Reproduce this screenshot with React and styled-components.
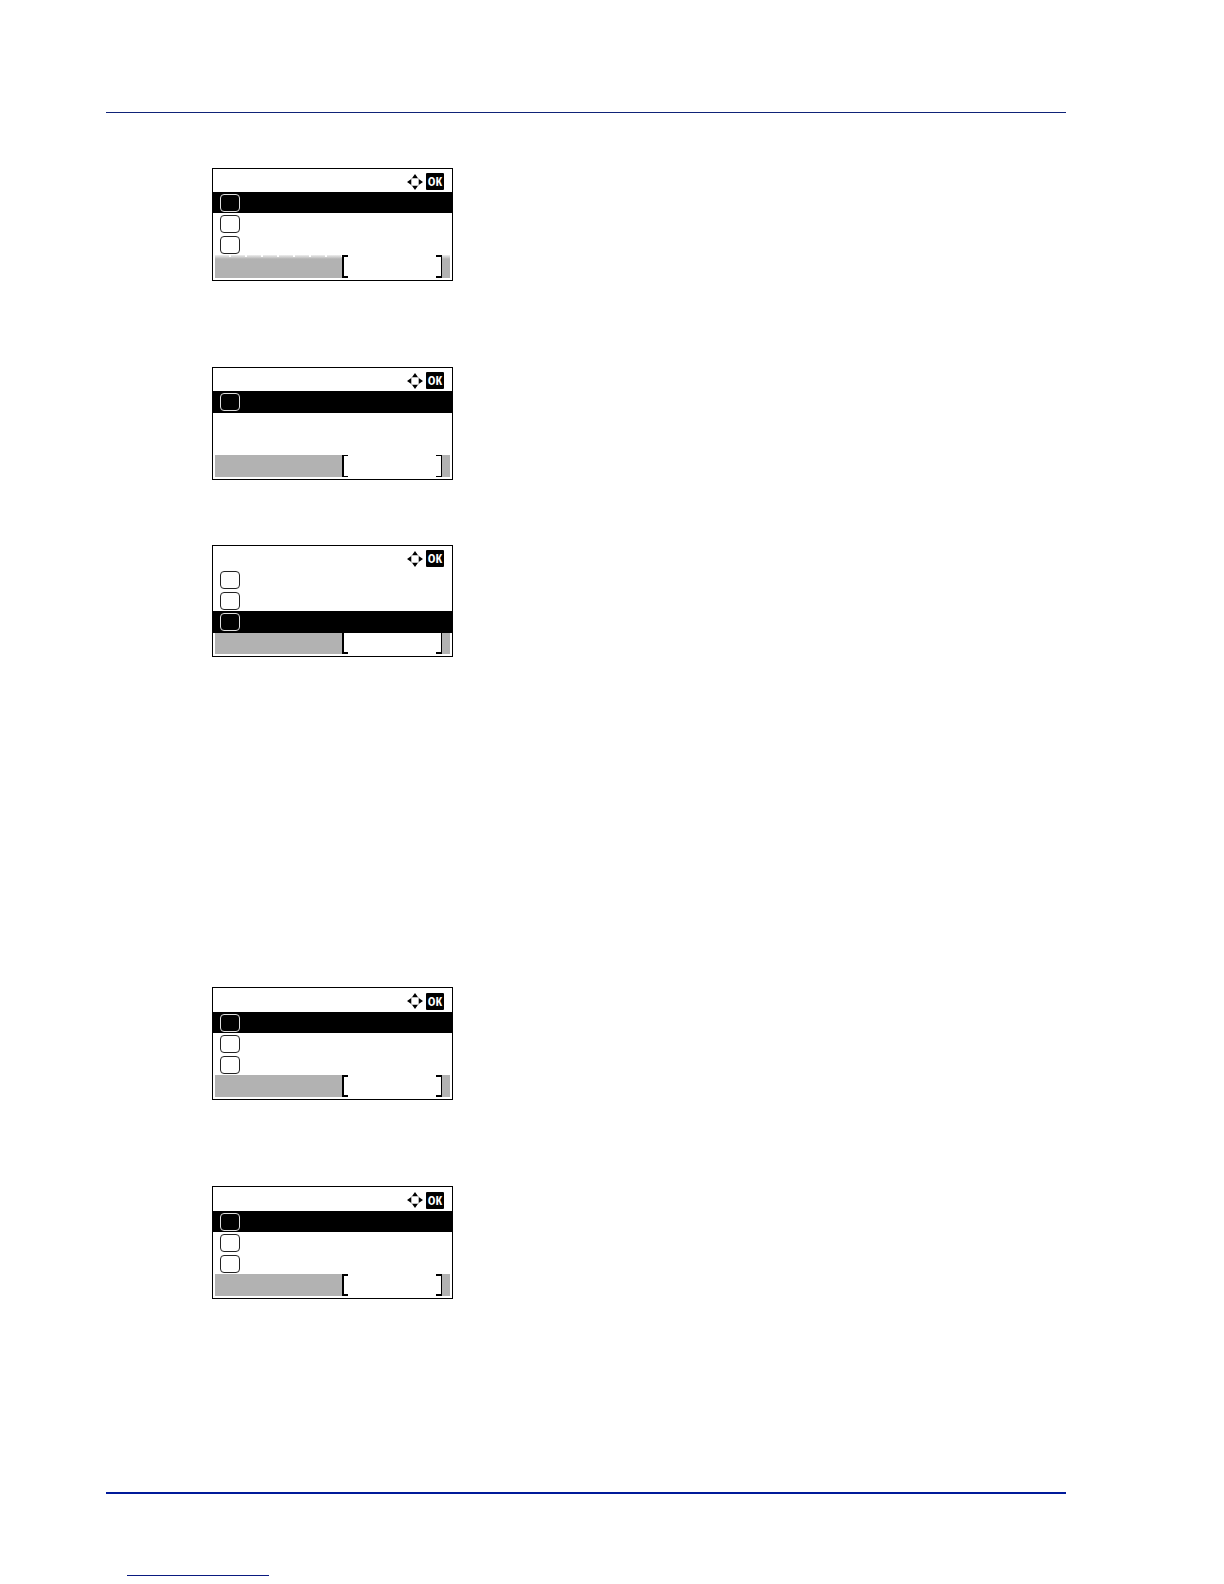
import { createGlobalStyle, styled } from "styled-components";

// rows: how many menu entries, selected: highlighted entry,
// head: title bar height, highlight: height of the selected entry,
// bar: key bar height, arm: bracket stroke, gap: space above the panel
const FIRST_GROUP = [
  { id: "a", rows: 3, selected: 0, bar: 23, faded: true },
  { id: "b", rows: 1, selected: 0, highlight: 22, arm: 1, gap: 86 },
  { id: "c", rows: 3, selected: 2, highlight: 22, bar: 21, gap: 65 },
];

const SECOND_GROUP = [
  { id: "d", rows: 3, selected: 0, head: 24 },
  { id: "e", rows: 3, selected: 0, head: 24, gap: 86 },
];

const ArrowKeys = () => (
  <svg width="16" height="16" viewBox="0 0 16 16" aria-hidden="true">
    <path d="M8 0 11 4.3H5Z M8 16 5 11.7H11Z M0 8 4.3 5V11Z M16 8 11.7 5V11Z" />
    <path
      d="M5.2 4.2 4.2 5.2 M10.8 4.2 11.8 5.2 M5.2 11.8 4.2 10.8 M10.8 11.8 11.8 10.8"
      stroke="#999999"
      strokeWidth="1"
      fill="none"
    />
  </svg>
);

const MenuScreen = ({
  id,
  rows,
  selected,
  head = 23,
  highlight = 21,
  bar = 22,
  arm = 2,
  faded,
  gap = 0,
}) => {
  const tucked = selected === 2;

  return (
    <Screen $gap={gap}>
      <Header $height={head}>
        <ArrowKeys />
        <OkButton type="button">OK</OkButton>
      </Header>
      <MenuList $height={42 + highlight}>
        {Array.from({ length: rows }, (_, i) => (
          <MenuRow
            key={i}
            $selected={i === selected}
            $height={i === selected ? highlight : 21}
          >
            <ItemBox
              type="checkbox"
              id={`${id}-${i}`}
              aria-label={`Item ${i + 1}`}
            />
          </MenuRow>
        ))}
      </MenuList>
      <KeyBar $faded={faded} $height={bar}>
        <SoftKey type="button" aria-label="Soft key">
          <Bracket $side="left" $arm={arm} $tucked={tucked} />
          <Bracket $side="right" $arm={arm} $tucked={tucked} />
        </SoftKey>
      </KeyBar>
    </Screen>
  );
};

export default function App() {
  return (
    <>
      <GlobalStyle />
      <Page>
        <Content>
          <Group>
            {FIRST_GROUP.map((screen) => (
              <MenuScreen key={screen.id} {...screen} />
            ))}
          </Group>
          <Group>
            {SECOND_GROUP.map((screen) => (
              <MenuScreen key={screen.id} {...screen} />
            ))}
          </Group>
        </Content>
        <Footer>
          <FooterLink href="#top" aria-label="Back to top" />
        </Footer>
      </Page>
    </>
  );
}

const GlobalStyle = createGlobalStyle`
  * {
    box-sizing: border-box;
  }
  body {
    margin: 0;
    background-color: #ffffff;
    font-family: "Liberation Sans", Arial, sans-serif;
  }
`;

const Page = styled.div`
  padding: 112px 158px 8px 106px;
`;

const Content = styled.main`
  display: flex;
  flex-direction: column;
  gap: 330px;
  padding: 55px 0 193px 106px;
  border-top: 1px solid #0f2378;
`;

const Group = styled.section`
  display: flex;
  flex-direction: column;
  align-items: flex-start;
`;

const Screen = styled.div`
  display: flex;
  flex-direction: column;
  width: 241px;
  margin-top: ${({ $gap }) => $gap}px;
  padding-bottom: 2px;
  border: 1px solid #000000;
`;

const Header = styled.div`
  display: flex;
  align-items: center;
  justify-content: flex-end;
  gap: 3px;
  height: ${({ $height }) => $height}px;
  padding: 2px 8px 0 0;
`;

const OkButton = styled.button`
  width: 18px;
  height: 17px;
  padding: 0;
  border: none;
  border-radius: 1px;
  background-color: #000000;
  color: #ffffff;
  font-family: "Open Sans Condensed", "Liberation Sans Narrow",
    "Liberation Sans", sans-serif;
  font-size: 13px;
  font-weight: 700;
  line-height: 17px;
  text-align: center;
`;

const MenuList = styled.ul`
  min-height: ${({ $height }) => $height}px;
  margin: 0;
  padding: 0;
  list-style: none;
`;

const MenuRow = styled.li`
  display: flex;
  align-items: center;
  height: ${({ $height }) => $height}px;
  padding-left: 7px;
  background-color: ${({ $selected }) => ($selected ? "#000000" : "#ffffff")};
  color: ${({ $selected }) => ($selected ? "#e0e0e0" : "#222222")};
`;

const ItemBox = styled.input`
  appearance: none;
  width: 20px;
  height: 18px;
  margin: 0;
  border: 1px solid;
  border-radius: 4px;
  color: inherit;
`;

const KeyBar = styled.div`
  display: flex;
  justify-content: flex-end;
  height: ${({ $height }) => $height}px;
  margin: 0 2px;
  padding-right: 8px;
  background: ${({ $faded }) =>
    $faded
      ? `repeating-linear-gradient(90deg, #ffffff00 0 14px, #ffffff 14px 16px)
          0 0 / 100% 2px no-repeat,
        linear-gradient(#eeeeee, #b2b2b2 4px)`
      : "#b2b2b2"};
`;

const SoftKey = styled.button`
  display: flex;
  justify-content: space-between;
  width: 100px;
  padding: 0;
  border: none;
  background-color: #ffffff;
`;

const Bracket = styled.span`
  width: 6px;
  height: 100%;
  border: 1px solid #000000;
  border-top-width: ${({ $arm, $tucked }) => ($tucked ? 0 : $arm)}px;
  border-bottom-width: ${({ $arm }) => $arm}px;
  ${({ $side }) =>
    $side === "left"
      ? "border-left-width: 2px; border-right: none;"
      : "border-left: none;"}
`;

const Footer = styled.footer`
  padding: 81px 0 0 21px;
  border-top: 2px solid #001a9a;
`;

const FooterLink = styled.a`
  display: block;
  width: 142px;
  border-bottom: 1px solid #0a1a80;
`;
